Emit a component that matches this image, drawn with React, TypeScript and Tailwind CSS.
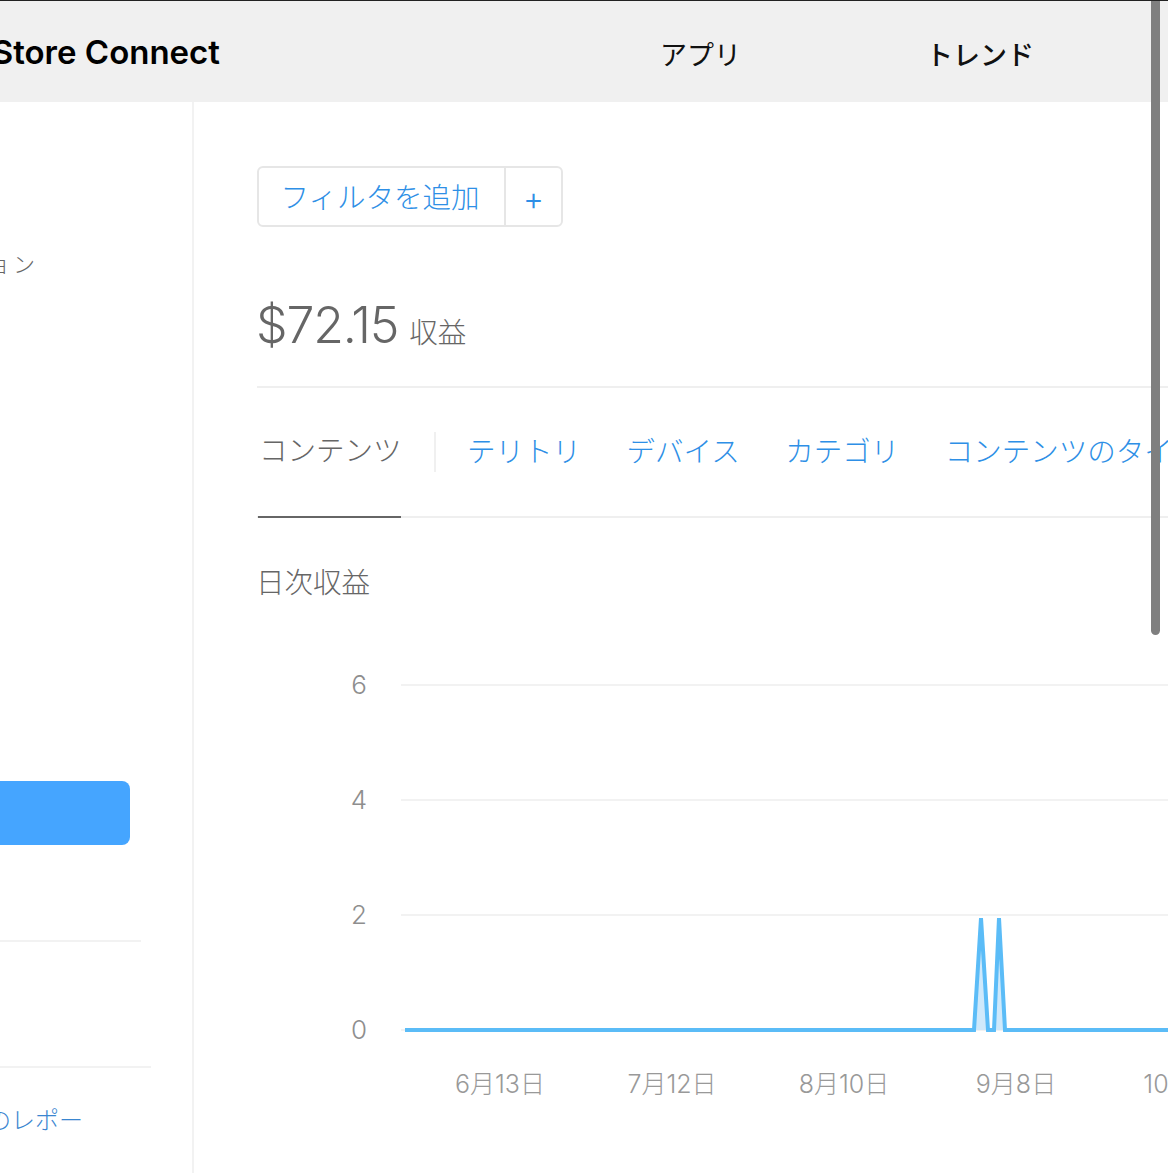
const tabs = ['テリトリ', 'デバイス', 'カテゴリ', 'コンテンツのタイプ'];
const yTicks = [
  { label: '6', y: 685 },
  { label: '4', y: 800 },
  { label: '2', y: 915 },
  { label: '0', y: 1030 },
];
const xTicks = [
  { label: '6月13日', x: 500 },
  { label: '7月12日', x: 672 },
  { label: '8月10日', x: 844 },
  { label: '9月8日', x: 1016 },
  { label: '10月7日', x: 1188 },
];

function RevenueChart() {
  const line = 'M405 1030H974L981 918L988 1030H994L999 918L1005 1030H1168';
  return (
    <svg viewBox="257 660 911 513" className="block h-[513px] w-[911px]">
      {yTicks.map((t) => (
        <g key={t.label}>
          <line x1="401" x2="1168" y1={t.y} y2={t.y} stroke="#f2f2f2" strokeWidth="2" />
          <text x="359" y={t.y + 9} textAnchor="middle" fontSize="26" fontWeight="300" fill="#8e8e8e">
            {t.label}
          </text>
        </g>
      ))}
      <path d="M974 1030L981 918L988 1030ZM994 1030L999 918L1005 1030Z" fill="#cfe9fb" />
      <path d={line} fill="none" stroke="#5bbcf7" strokeWidth="4" />
      {xTicks.map((t) => (
        <text key={t.label} x={t.x} y="1093" textAnchor="middle" fontSize="25" fontWeight="300" fill="#999999">
          {t.label}
        </text>
      ))}
    </svg>
  );
}

export default function App() {
  return (
    <div className="relative h-[1173px] w-[1168px] overflow-hidden border-t border-t-[#222222] bg-white font-['Inter','Noto_Sans_CJK_JP',sans-serif]">
      <header className="flex h-[101px] items-center bg-[#f0f0f0]">
        <div className="flex w-[220px] shrink-0 justify-end overflow-hidden pt-[3px]">
          <span className="whitespace-nowrap text-[33px] font-semibold text-black">App Store Connect</span>
        </div>
        <nav className="mt-[10px] flex text-[27px] text-[#111111]">
          <span className="ml-[440px]">アプリ</span>
          <span className="ml-[185px] font-medium">トレンド</span>
        </nav>
      </header>

      <div className="flex h-[1071px]">
        <aside className="w-[194px] shrink-0 overflow-hidden border-r-2 border-r-[#f2f2f2]">
          <div className="ml-[-12px] mt-[146px] flex h-[32px] items-center whitespace-nowrap text-[22px] font-light tracking-[3px] text-[#666666]">
            ョン
          </div>
          <div className="mt-[501px] h-[64px] w-[130px] rounded-r-lg bg-[#45a5ff]" />
          <div className="mt-[95px] h-[2px] w-[141px] bg-[#f2f2f2]" />
          <div className="mt-[124px] h-[2px] w-[151px] bg-[#f2f2f2]" />
          <div className="ml-[-13px] mt-[35px] whitespace-nowrap text-[24px] font-light text-[#3a86d0]">のレポー</div>
        </aside>

        <main className="min-w-0 flex-1 overflow-hidden pl-[63px] pt-[64px]">
          <div className="flex h-[61px] w-[306px] items-center rounded-md border-2 border-[#e6e6e6] text-[#2e8fe6]">
            <span className="flex h-full w-[247px] items-center justify-center whitespace-nowrap border-r-2 border-r-[#e6e6e6] pr-[3px] pt-[3px] text-[28.5px] font-light">
              フィルタを追加
            </span>
            <span className="flex-1 pt-1 text-center text-[32px] font-light">+</span>
          </div>

          <div className="flex h-[161px] items-baseline border-b-2 border-b-[#efefef] pt-[61px] text-[#666666]">
            <span className="-ml-px text-[50px] font-light tracking-[-1.2px]">$72.15</span>
            <span className="ml-[11px] text-[28.5px] font-light">収益</span>
          </div>

          <div className="flex h-[130px] items-center whitespace-nowrap border-b-2 border-b-[#efefef] text-[28.5px] font-light text-[#2e8fe6]">
            <div className="mb-[-2px] ml-px flex h-[130px] w-[143px] shrink-0 items-center border-b-2 border-b-[#666666] pl-px text-[#666666]">
              <span className="mb-[1px]">コンテンツ</span>
            </div>
            <div className="ml-[33px] h-[40px] w-[2px] shrink-0 bg-[#f0f0f0]" />
            <div className="ml-[31px] flex gap-[45.5px]">
              {tabs.map((t) => (
                <span key={t}>{t}</span>
              ))}
            </div>
          </div>

          <div className="-ml-px mt-[44px] text-[28.5px] font-light leading-[42px] text-[#666666]">日次収益</div>
          <div className="mt-[56px]">
            <RevenueChart />
          </div>
        </main>
      </div>

      {/* overlay scrollbar */}
      <div className="absolute right-[8px] top-0 h-[634px] w-[9px] rounded-b-md bg-[#7f7f7f]" />
    </div>
  );
}
